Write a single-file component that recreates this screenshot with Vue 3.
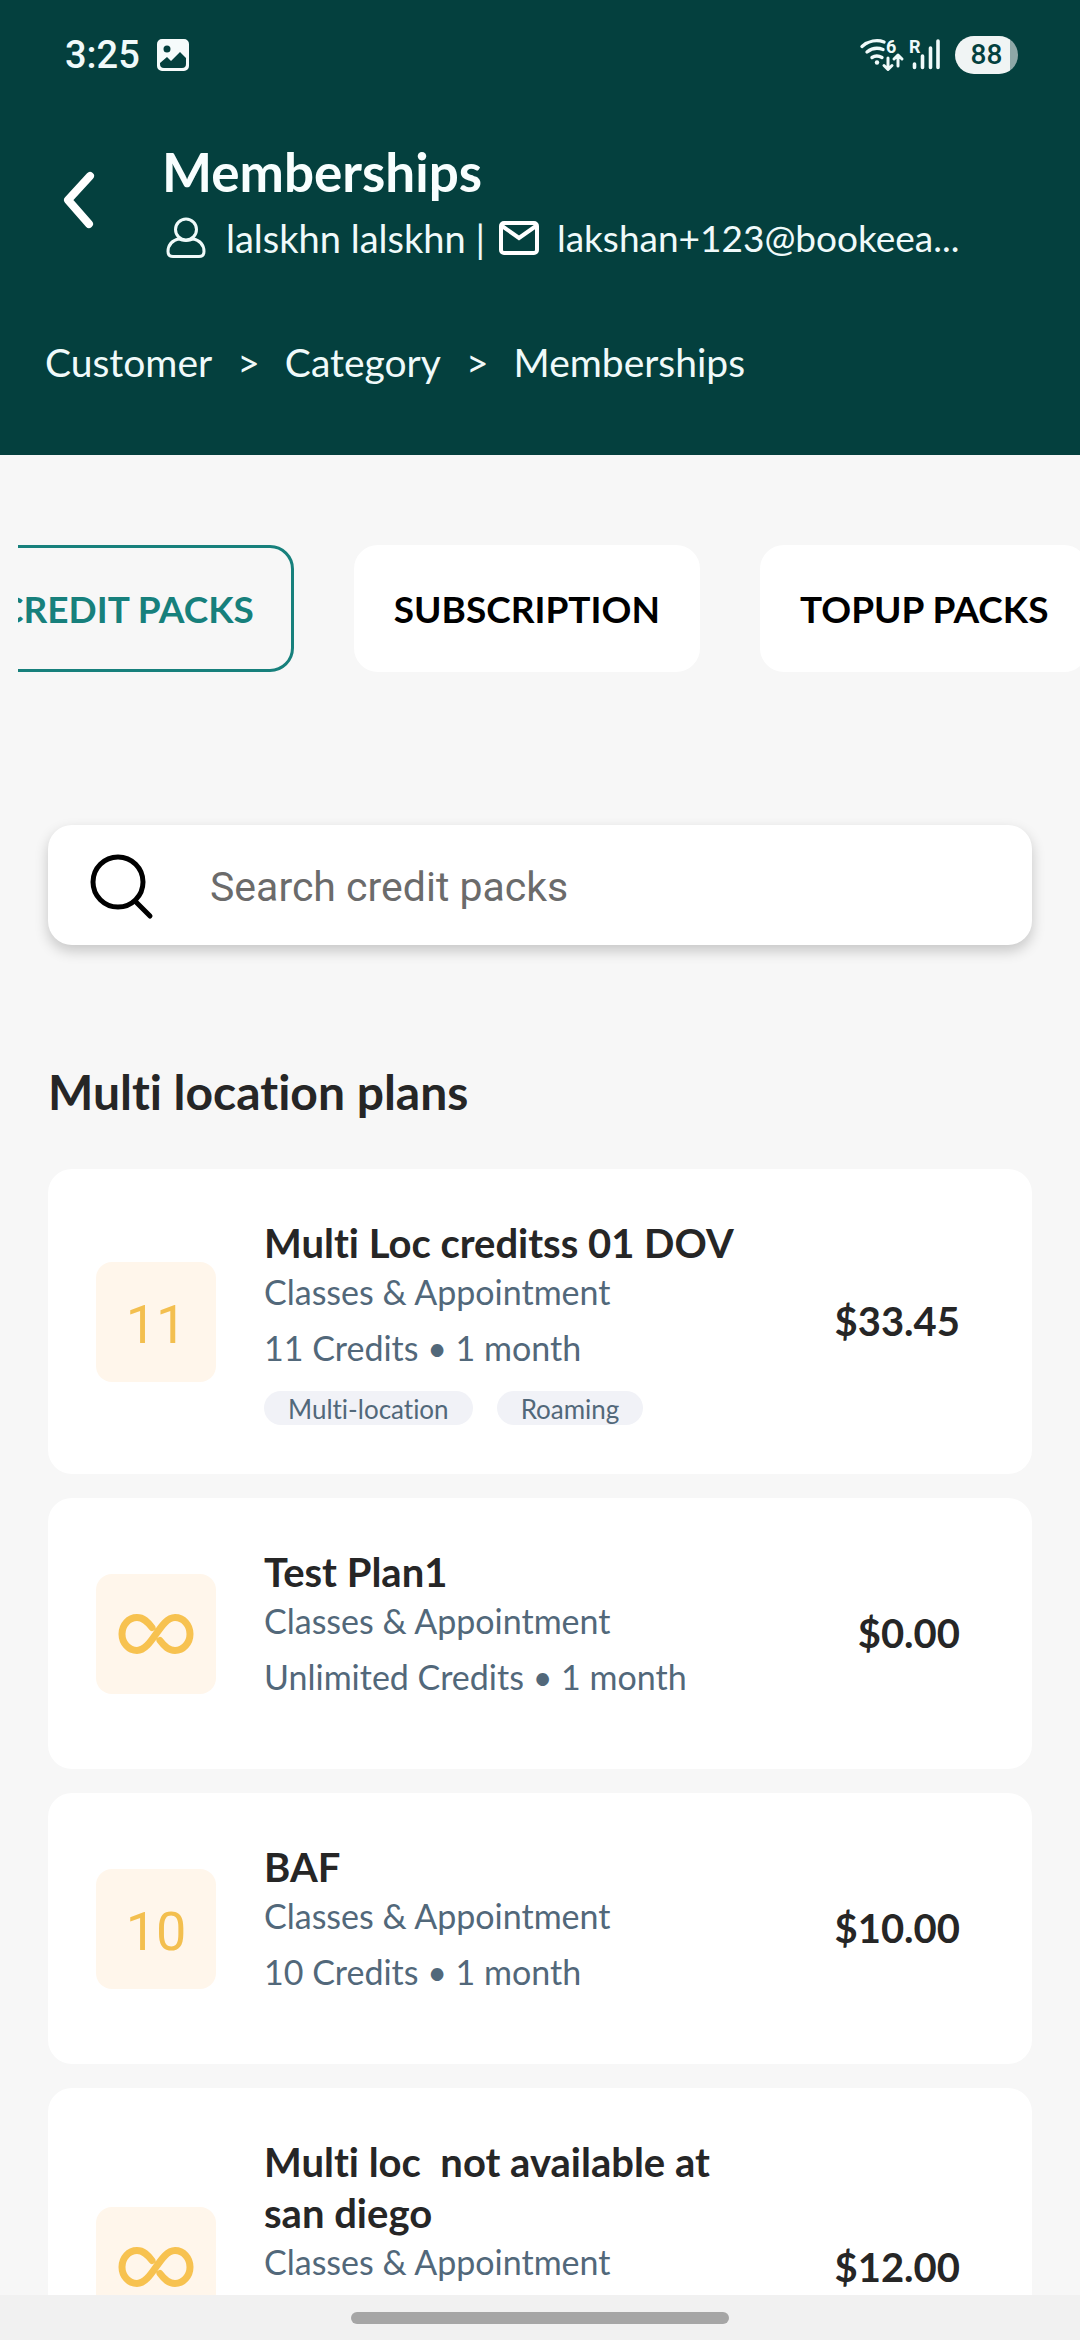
<script setup>
import { onMounted, ref } from 'vue'

const tabs = ['CREDIT PACKS', 'SUBSCRIPTION', 'TOPUP PACKS']
const active = ref('CREDIT PACKS')
const query = ref('')
const tabStrip = ref(null)

const plans = [
  { name: 'Multi Loc creditss 01 DOV', credits: '11', detail: '11 Credits • 1 month', price: '$33.45', tags: ['Multi-location', 'Roaming'] },
  { name: 'Test Plan1', credits: null, detail: 'Unlimited Credits • 1 month', price: '$0.00', tags: [] },
  { name: 'BAF', credits: '10', detail: '10 Credits • 1 month', price: '$10.00', tags: [] },
  { name: 'Multi loc  not available at san diego', credits: null, detail: '', price: '$12.00', tags: [] },
]

onMounted(() => {
  tabStrip.value.scrollLeft = 59
})
</script>

<template>
  <div class="screen">
    <header class="header">
      <div class="status">
        <span class="clock">3:25</span>
        <svg class="status-photo" viewBox="0 0 32 32" aria-hidden="true">
          <path fill="#f6fbfb" fill-rule="evenodd" d="M5 0h22a5 5 0 0 1 5 5v22a5 5 0 0 1-5 5H5a5 5 0 0 1-5-5V5a5 5 0 0 1 5-5zM10 6.500a3.500 3.500 0 1 0 0 7 3.500 3.500 0 0 0 0-7zM3 25a4 4 0 0 0 4 4h18a4 4 0 0 0 4-4v-6l-6-6-9 9-4-4-7 6z" />
        </svg>
        <svg class="status-radio" viewBox="0 0 84 36" aria-hidden="true">
          <g fill="none" stroke="#f0fafa" stroke-width="3.400" stroke-linecap="round">
            <path d="M2 9.500C8.500 4 17 2.500 24 5" />
            <path d="M7 15C12 11 18 10.500 23 12.500" />
            <path d="M12 20.500C15 18.500 18.500 18.500 22 20.500" />
            <path d="M28 21v11M24 28.500l4 4 4-4M38 29V18M34 22l4-4 4 4" stroke-width="3" stroke-linejoin="round" />
            <path d="M54.500 27v3.500M62.500 19v11.500M70.500 11v19.500M78 4v26.500" stroke-width="3.600" />
          </g>
          <circle cx="17" cy="25.500" r="2.200" fill="#f0fafa" />
          <text x="26" y="15.500" class="radio-text">6</text>
          <text x="49" y="15.500" class="radio-text">R</text>
        </svg>
        <span class="battery">88</span>
      </div>

      <div class="heading">
        <button class="back" type="button" aria-label="Back">
          <svg viewBox="0 0 34 60"><path d="M28 6 6 30l21 24" fill="none" stroke="#fff" stroke-width="8" stroke-linecap="round" stroke-linejoin="round" /></svg>
        </button>
        <div class="heading-text">
          <h1>Memberships</h1>
          <div class="contact">
            <svg class="icon-user" viewBox="0 0 40 42" fill="none" stroke="#f0fafa" stroke-width="3">
              <circle cx="20" cy="12.500" r="10.500" />
              <path d="M13.500 21.500C6 23.500 2 28.500 2 34.500c0 3.500 1.500 5 5 5h26c3.500 0 5-1.500 5-5 0-6-4-11-11.500-13" />
              <path d="M12.500 21.800c4.500 2 10.500 2 15 0" />
            </svg>
            <span class="person">lalskhn lalskhn |</span>
            <svg class="icon-mail" viewBox="0 0 40 34" fill="none" stroke="#fff" stroke-width="4">
              <rect x="2" y="2" width="36" height="30" rx="3" />
              <path d="m3 5 17 12L37 5" />
            </svg>
            <span class="email">lakshan+123@bookeea...</span>
          </div>
        </div>
      </div>

      <nav class="crumbs" aria-label="Breadcrumb">
        <a href="#customer">Customer</a>
        <span>&gt;</span>
        <a href="#category">Category</a>
        <span>&gt;</span>
        <a href="#memberships">Memberships</a>
      </nav>
    </header>

    <main class="content">
      <div ref="tabStrip" class="tabs">
        <button
          v-for="tab in tabs"
          :key="tab"
          type="button"
          class="tab"
          :class="{ active: tab === active }"
          @click="active = tab"
        >{{ tab }}</button>
      </div>

      <label class="search">
        <svg viewBox="0 0 64 66" fill="none" stroke="#000" stroke-width="5" stroke-linecap="round">
          <circle cx="28" cy="28" r="25" />
          <path d="m45 47 15 15" />
        </svg>
        <input v-model="query" type="text" placeholder="Search credit packs" aria-label="Search credit packs" />
      </label>

      <h2>Multi location plans</h2>

      <ul class="plans">
        <li v-for="plan in plans" :key="plan.name" class="plan">
          <div class="badge">
            <span v-if="plan.credits" class="count">{{ plan.credits }}</span>
            <svg v-else viewBox="0 0 76 42" aria-label="Unlimited" fill="none" stroke="#f7c250" stroke-width="7" stroke-linecap="round" stroke-linejoin="round">
              <path d="M34 14.500C29.500 8.500 25.500 4.500 19 4.500a15 16.500 0 0 0 0 33C34 37.500 42 4.500 57 4.500a15 16.500 0 0 1 0 33c-6.500 0-10.500-4-15-10" />
            </svg>
          </div>
          <div class="info">
            <h3>{{ plan.name }}</h3>
            <p>Classes &amp; Appointment</p>
            <p class="detail">{{ plan.detail }}</p>
            <div class="tags" :class="{ reserved: !plan.detail }">
              <span v-for="tag in plan.tags" :key="tag" class="tag">{{ tag }}</span>
            </div>
          </div>
          <div class="price">{{ plan.price }}</div>
        </li>
      </ul>
    </main>

    <footer class="gesture"><span class="handle"></span></footer>
  </div>
</template>

<style>
body {
  margin: 0;
}
</style>

<style scoped>
.screen {
  display: flex;
  flex-direction: column;
  height: 100vh;
  overflow: hidden;
  background: #f7f7f7;
  color: #262626;
  font-family: Lato, "Noto Sans", sans-serif;
  font-variant-ligatures: none;
}

h1,
h2,
h3,
p,
ul {
  margin: 0;
  padding: 0;
}

.header {
  flex: none;
  box-sizing: border-box;
  padding: 32px 45px 67px;
  background: #04403e;
  color: #f0fafa;
}

.status {
  display: flex;
  align-items: center;
  height: 46px;
  padding: 0 17px 0 20px;
}

.clock {
  font: 500 38px/46px Roboto, sans-serif;
}

.status-photo {
  width: 32px;
  height: 32px;
  margin-left: 17px;
}

.status-radio {
  width: 84px;
  height: 36px;
  margin-left: auto;
  overflow: visible;
}

.radio-text {
  fill: #f0fafa;
  font: 700 18px Roboto, sans-serif;
}

.battery {
  width: 63px;
  height: 38px;
  margin-left: 11px;
  border-radius: 19px;
  background: linear-gradient(to right, #f0f4f4 55px, #8fa8a7 55px);
  color: #04403e;
  font: 500 28px/38px Roboto, sans-serif;
  text-align: center;
}

.heading {
  display: flex;
  align-items: flex-start;
  margin-top: 60px;
}

.back {
  flex: none;
  width: 68px;
  height: 60px;
  margin-top: 32px;
  padding: 0;
  border: 0;
  background: none;
}

.back svg {
  display: block;
  width: 34px;
  height: 60px;
  margin: 0 auto;
}

.heading-text {
  min-width: 0;
  margin-left: 49px;
}

h1 {
  color: #f8fefe;
  font-size: 53px;
  font-weight: 700;
  line-height: 68px;
}

.contact {
  display: flex;
  align-items: center;
  height: 64px;
  padding-left: 4px;
  font-size: 38px;
  line-height: 50px;
  white-space: nowrap;
}

.contact svg {
  flex: none;
}

.icon-user {
  width: 40px;
  height: 42px;
}

.person {
  margin-left: 20px;
}

.icon-mail {
  width: 40px;
  height: 34px;
  margin: 0 18px 0 14px;
}

.email {
  font-size: 37px;
}

.crumbs {
  display: flex;
  gap: 25px;
  margin-top: 66px;
  font-size: 39px;
  line-height: 52px;
}

.crumbs a {
  color: inherit;
  text-decoration: none;
}

.content {
  flex: 1;
  min-height: 0;
  overflow: hidden;
}

.tabs {
  display: flex;
  gap: 60px;
  margin: 90px 0 0 18px;
  overflow: hidden;
}

.tab {
  flex: none;
  height: 127px;
  padding: 0 37px;
  border: 3px solid #fff;
  border-radius: 24px;
  background: #fff;
  color: #000;
  font: 700 37px/50px Lato, "Noto Sans", sans-serif;
}

.tab.active {
  border-color: #17807c;
  background: none;
  color: #17807c;
}

.tab:last-child {
  margin-right: 60px;
}

.search {
  display: flex;
  align-items: center;
  height: 120px;
  margin: 153px 48px 0;
  padding: 4px 42px 0;
  box-sizing: border-box;
  border-radius: 24px;
  background: #fff;
  box-shadow: 0 6px 14px rgba(0, 0, 0, 0.2);
}

.search svg {
  flex: none;
  width: 64px;
  height: 66px;
}

.search input {
  flex: 1;
  min-width: 0;
  margin-left: 56px;
  padding: 0;
  border: 0;
  outline: 0;
  background: none;
  font: 400 41px/48px Roboto, sans-serif;
}

.search input::placeholder {
  color: #6b6b6b;
  opacity: 1;
}

h2 {
  margin: 117px 48px 0;
  font-size: 48px;
  font-weight: 700;
  line-height: 60px;
}

.plans {
  display: flex;
  flex-direction: column;
  gap: 24px;
  margin: 47px 48px 0;
  list-style: none;
}

.plan {
  display: flex;
  align-items: center;
  padding: 49px 72px 49px 48px;
  border-radius: 24px;
  background: #fff;
}

.badge {
  display: flex;
  flex: none;
  align-items: center;
  justify-content: center;
  width: 120px;
  height: 120px;
  border-radius: 16px;
  background: #fff6eb;
  color: #f3bf4f;
}

.count {
  padding-top: 6px;
  font: 400 54px/60px Roboto, sans-serif;
}

.badge svg {
  width: 76px;
  height: 42px;
}

.info {
  flex: 1;
  min-width: 0;
  margin-left: 48px;
}

h3 {
  font-size: 40px;
  font-weight: 700;
  line-height: 51px;
  white-space: pre-wrap;
}

p {
  min-height: 45px;
  color: #52687a;
  font-size: 34px;
  line-height: 45px;
}

.detail {
  margin-top: 11px;
}

.tags {
  display: flex;
  gap: 24px;
  margin-top: 21px;
}

.tags.reserved {
  min-height: 36px;
}

.tag {
  height: 34px;
  padding: 0 24px;
  border-radius: 17px;
  background: #f1f2f7;
  color: #52687a;
  font-size: 26px;
  line-height: 36px;
}

.price {
  flex: none;
  width: 220px;
  font-size: 40px;
  font-weight: 700;
  line-height: 51px;
  text-align: right;
}

.gesture {
  display: flex;
  flex: none;
  justify-content: center;
  height: 28px;
  padding-top: 17px;
  background: #f1f1f1;
}

.handle {
  width: 35%;
  height: 12px;
  border-radius: 6px;
  background: #a6a6a6;
}
</style>
